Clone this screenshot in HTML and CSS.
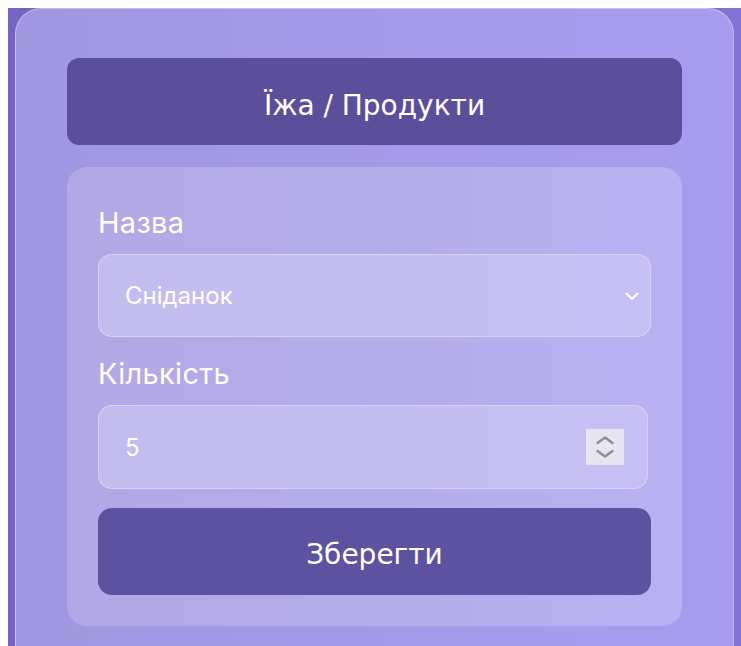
FILE: index.html
```html
<!DOCTYPE html>
<html lang="uk">
<head>
<meta charset="utf-8">
<title>Їжа / Продукти</title>
<link rel="stylesheet" href="styles.css">
</head>
<body>
<div class="page">
  <div class="card">
    <h1 class="title">Їжа / Продукти</h1>
    <form class="panel">
      <label class="field-label" for="name">Назва</label>
      <div class="select-wrap">
        <select id="name" class="control select">
          <option>Сніданок</option>
          <option>Обід</option>
          <option>Вечеря</option>
        </select>
        <svg class="chevron" width="14" height="9" viewBox="0 0 14 9" aria-hidden="true">
          <path d="M1.5 1.5 L7 7 L12.5 1.5" fill="none" stroke="#fff" stroke-width="2" stroke-linecap="round" stroke-linejoin="round"/>
        </svg>
      </div>
      <label class="field-label second" for="qty">Кількість</label>
      <div class="number-wrap">
        <input id="qty" class="control number" type="number" value="5">
        <span class="spinner" aria-hidden="true">
          <svg width="38" height="36" viewBox="0 0 38 36">
            <path d="M11.5 14 L19 8.5 L26.5 14" fill="none" stroke="#8e8b9e" stroke-width="2.4" stroke-linecap="round" stroke-linejoin="round"/>
            <path d="M11.5 22 L19 27.5 L26.5 22" fill="none" stroke="#8e8b9e" stroke-width="2.4" stroke-linecap="round" stroke-linejoin="round"/>
          </svg>
        </span>
      </div>
      <button type="button" class="save">Зберегти</button>
    </form>
  </div>
</div>
</body>
</html>
```

FILE: styles.css
```css
html {
  background: #ffffff;
}

body {
  margin: 8px 0 0 8px;
  font-family: Inter, "Noto Sans", sans-serif;
  overflow: hidden;
}

.page {
  min-height: 700px;
  padding-left: 7px;
  background: linear-gradient(90deg, #7565c2 0%, #8070d0 60%, #8373d6 100%);
}

.card {
  box-sizing: border-box;
  width: 719px;
  min-height: 700px;
  padding: 49px 51px 20px;
  border: 1px solid rgba(255, 255, 255, 0.35);
  border-radius: 26px;
  background: linear-gradient(90deg, #a097e0 0%, #a59bea 60%, #a89cef 100%);
}

.title {
  box-sizing: border-box;
  height: 87px;
  margin: 0;
  padding-top: 7px;
  display: flex;
  align-items: center;
  justify-content: center;
  border-radius: 12px;
  background: #5b4f9c;
  color: #ffffff;
  font-family: "DejaVu Sans", sans-serif;
  font-weight: normal;
  font-size: 28px;
}

.panel {
  margin-top: 22px;
  padding: 39px 31px 31px;
  border-radius: 20px;
  background: linear-gradient(90deg, #b1a8e5 0%, #b5ade9 50%, #b9b1f2 100%);
  display: flex;
  flex-direction: column;
}

.field-label {
  display: block;
  height: 34px;
  font-size: 29px;
  line-height: 34px;
  letter-spacing: 0.3px;
  color: #ffffff;
  margin-bottom: 14px;
}

.field-label.second {
  margin-top: 20px;
  margin-bottom: 14px;
}

.select-wrap,
.number-wrap {
  position: relative;
}

.control {
  box-sizing: border-box;
  display: block;
  margin: 0;
  padding: 0 0 0 26px;
  border: 1px solid rgba(255, 255, 255, 0.32);
  border-radius: 14px;
  background: rgba(210, 204, 245, 0.55);
  color: #ffffff;
  font-family: Inter, "Noto Sans", sans-serif;
  font-size: 24px;
  outline: none;
}

.select {
  width: 553px;
  height: 83px;
  appearance: none;
  -webkit-appearance: none;
}

.chevron {
  position: absolute;
  left: 527px;
  top: 38px;
}

.number {
  width: 550px;
  height: 84px;
  -moz-appearance: textfield;
}

.number::-webkit-inner-spin-button,
.number::-webkit-outer-spin-button {
  -webkit-appearance: none;
  margin: 0;
}

.spinner {
  position: absolute;
  left: 488px;
  top: 24px;
  width: 38px;
  height: 36px;
  background: #e7e5ef;
  display: block;
}

.spinner svg {
  display: block;
}

.save {
  margin-top: 19px;
  width: 553px;
  height: 87px;
  padding: 5px 0 0;
  border: none;
  border-radius: 14px;
  background: #5d529f;
  color: #ffffff;
  font-family: "DejaVu Sans", sans-serif;
  font-size: 28px;
  cursor: pointer;
}
```
